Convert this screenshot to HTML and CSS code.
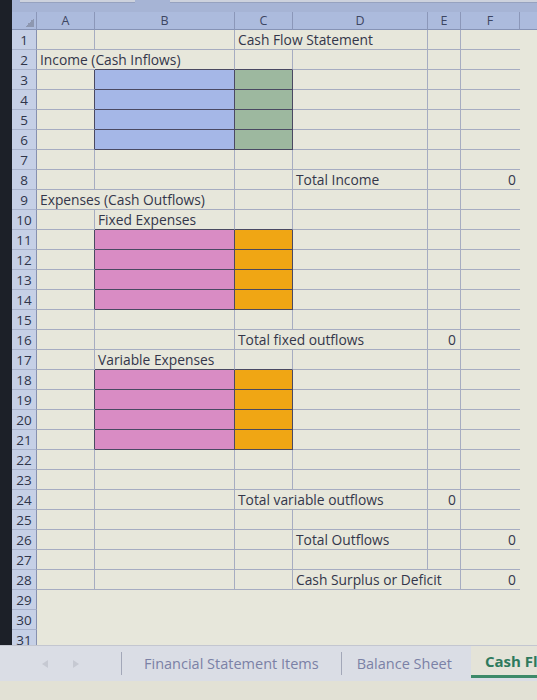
FILE: index.html
```html
<!DOCTYPE html>
<html lang="en">
<head>
    <meta charset="UTF-8">
    <meta name="viewport" content="width=device-width, initial-scale=1.0">
    <title>Cash Flow Statement</title>
    <link rel="stylesheet" href="styles.css">
</head>
<body>
<div class="window">
    <div class="formula-bar">
        <span class="name-box"></span>
        <span class="formula-box"></span>
    </div>

    <div class="sheet">
        <table class="grid">
            <colgroup>
                <col class="c-rn"><col class="c-a"><col class="c-b"><col class="c-c"><col class="c-d"><col class="c-e"><col class="c-f"><col class="c-g">
            </colgroup>
            <thead>
                <tr><th class="corner"></th><th>A</th><th>B</th><th>C</th><th>D</th><th>E</th><th>F</th><th class="rest"></th></tr>
            </thead>
            <tbody>
                <tr><th>1</th><td></td><td></td><td class="spill">Cash Flow Statement</td><td></td><td></td><td></td><td></td></tr>
                <tr><th>2</th><td class="spill">Income (Cash Inflows)</td><td class="db"></td><td class="db"></td><td></td><td></td><td></td><td></td></tr>
                <tr><th>3</th><td class="dr"></td><td class="blue"></td><td class="green"></td><td></td><td></td><td></td><td></td></tr>
                <tr><th>4</th><td class="dr"></td><td class="blue"></td><td class="green"></td><td></td><td></td><td></td><td></td></tr>
                <tr><th>5</th><td class="dr"></td><td class="blue"></td><td class="green"></td><td></td><td></td><td></td><td></td></tr>
                <tr><th>6</th><td class="dr"></td><td class="blue"></td><td class="green"></td><td></td><td></td><td></td><td></td></tr>
                <tr><th>7</th><td></td><td></td><td></td><td></td><td></td><td></td><td></td></tr>
                <tr><th>8</th><td></td><td></td><td></td><td>Total Income</td><td></td><td class="num">0</td><td></td></tr>
                <tr><th>9</th><td class="spill">Expenses (Cash Outflows)</td><td></td><td></td><td></td><td></td><td></td><td></td></tr>
                <tr><th>10</th><td></td><td class="db">Fixed Expenses</td><td class="db"></td><td></td><td></td><td></td><td></td></tr>
                <tr><th>11</th><td class="dr"></td><td class="pink"></td><td class="orange"></td><td></td><td></td><td></td><td></td></tr>
                <tr><th>12</th><td class="dr"></td><td class="pink"></td><td class="orange"></td><td></td><td></td><td></td><td></td></tr>
                <tr><th>13</th><td class="dr"></td><td class="pink"></td><td class="orange"></td><td></td><td></td><td></td><td></td></tr>
                <tr><th>14</th><td class="dr"></td><td class="pink"></td><td class="orange"></td><td></td><td></td><td></td><td></td></tr>
                <tr><th>15</th><td></td><td></td><td></td><td></td><td></td><td></td><td></td></tr>
                <tr><th>16</th><td></td><td></td><td class="spill">Total fixed outflows</td><td></td><td class="num">0</td><td></td><td></td></tr>
                <tr><th>17</th><td></td><td class="db">Variable Expenses</td><td class="db"></td><td></td><td></td><td></td><td></td></tr>
                <tr><th>18</th><td class="dr"></td><td class="pink"></td><td class="orange"></td><td></td><td></td><td></td><td></td></tr>
                <tr><th>19</th><td class="dr"></td><td class="pink"></td><td class="orange"></td><td></td><td></td><td></td><td></td></tr>
                <tr><th>20</th><td class="dr"></td><td class="pink"></td><td class="orange"></td><td></td><td></td><td></td><td></td></tr>
                <tr><th>21</th><td class="dr"></td><td class="pink"></td><td class="orange"></td><td></td><td></td><td></td><td></td></tr>
                <tr><th>22</th><td></td><td></td><td></td><td></td><td></td><td></td><td></td></tr>
                <tr><th>23</th><td></td><td></td><td></td><td></td><td></td><td></td><td></td></tr>
                <tr><th>24</th><td></td><td></td><td class="spill">Total variable outflows</td><td></td><td class="num">0</td><td></td><td></td></tr>
                <tr><th>25</th><td></td><td></td><td></td><td></td><td></td><td></td><td></td></tr>
                <tr><th>26</th><td></td><td></td><td></td><td>Total Outflows</td><td></td><td class="num">0</td><td></td></tr>
                <tr><th>27</th><td></td><td></td><td></td><td></td><td></td><td></td><td></td></tr>
                <tr><th>28</th><td></td><td></td><td></td><td class="spill">Cash Surplus or Deficit</td><td></td><td class="num">0</td><td></td></tr>
                <tr class="blank"><th>29</th><td></td><td></td><td></td><td></td><td></td><td></td><td></td></tr>
                <tr class="blank"><th>30</th><td></td><td></td><td></td><td></td><td></td><td></td><td></td></tr>
                <tr class="blank"><th>31</th><td></td><td></td><td></td><td></td><td></td><td></td><td></td></tr>
            </tbody>
        </table>
    </div>

    <div class="tabs">
        <div class="tab-nav">
            <svg width="6" height="8" viewBox="0 0 6 8"><path d="M6 0 L0 4 L6 8 Z"/></svg>
            <svg width="6" height="8" viewBox="0 0 6 8"><path d="M0 0 L6 4 L0 8 Z"/></svg>
        </div>
        <span class="sep"></span>
        <div class="tab">Financial Statement Items</div>
        <span class="sep"></span>
        <div class="tab tab-short">Balance Sheet</div>
        <div class="tab active">Cash Flow Statement</div>
    </div>
    <div class="status"></div>
</div>
</body>
</html>
```

FILE: styles.css
```css
/* Spreadsheet window */
body {
    margin: 0;
    background-color: #e3e2d6;
    font-family: "Open Sans", "Liberation Sans", sans-serif;
    color: #33364a;
}

.window {
    width: 537px;
    height: 700px;
    overflow: hidden;
    display: flex;
    flex-direction: column;
}

/* Bottom edge of the name box / formula field */
.formula-bar {
    flex: none;
    height: 12px;
    display: flex;
    gap: 35px;
    padding-left: 8px;
    background-color: #a6b4d5;
    border-left: 12px solid #1c2028;
}
.name-box, .formula-box {
    height: 2px;
    background-color: #cdd2dd;
    border-bottom: 1px solid #96a2bf;
}
.name-box { width: 115px; }
.formula-box { flex: 1; }

.sheet {
    flex: none;
    height: 633px;
    overflow: hidden;
    background-color: #e7e7db;
    border-left: 12px solid #1c2028;
}

/* Grid */
.grid {
    width: 525px;
    table-layout: fixed;
    border-collapse: separate;
    border-spacing: 0;
}
.c-rn { width: 25px; }
.c-a { width: 58px; }
.c-b { width: 140px; }
.c-c { width: 58px; }
.c-d { width: 135px; }
.c-e { width: 33px; }
.c-f { width: 59px; }
.c-g { width: 17px; }

.grid thead tr { height: 18px; }
.grid tbody tr { height: 20px; }

.grid thead th {
    padding: 0;
    font-size: 12.5px;
    font-weight: normal;
    line-height: 16px;
    color: #3d4662;
    background-color: #acbbdd;
    border-right: 1px solid #8b97b9;
    border-bottom: 1px solid #8693b5;
}
.grid thead th.rest { border-right: 0; }
.grid thead th.corner {
    background: linear-gradient(to bottom right, transparent 50%, #8d97b0 50%) no-repeat right 2px bottom 2px / 9px 9px, #acbbdd;
}

.grid tbody th {
    padding: 0;
    font-size: 13.5px;
    font-weight: normal;
    line-height: 17px;
    color: #2f3549;
    text-align: center;
    vertical-align: bottom;
    background-color: #c6d0e6;
    border-right: 1px solid #8791b0;
    border-bottom: 1px solid #a9b3cd;
}

.grid td {
    padding: 0 3px;
    font-size: 13.8px;
    line-height: 18px;
    white-space: nowrap;
    vertical-align: bottom;
    border-right: 1px solid #a6acc1;
    border-bottom: 1px solid #a6acc1;
}
/* column F has no right rule, column G is bare sheet */
.grid td:nth-child(7) { border-right: 0; }
.grid td:nth-child(8) { border: 0; }

/* text that runs on into the empty cell beside it */
.grid td.spill { border-right: 0; }
.grid td.num { text-align: right; padding-right: 4px; }

.grid tr.blank td { border: 0; }

/* filled input blocks */
.grid td.db { border-bottom-color: #4a4962; }
.grid td.dr { border-right-color: #4a4962; }
.grid td.blue, .grid td.green, .grid td.pink, .grid td.orange {
    border-right-color: #4a4962;
    border-bottom-color: #4a4962;
}
.grid td.blue { background-color: #a5b7e7; }
.grid td.green { background-color: #9db89f; }
.grid td.pink { background-color: #d98cc4; }
.grid td.orange { background-color: #f0a614; }

/* Sheet tabs */
.tabs {
    flex: none;
    height: 35px;
    display: flex;
    align-items: center;
    background-color: #dadde5;
    border-top: 1px solid #c3c6d0;
    white-space: nowrap;
}
.tab-nav {
    width: 121px;
    display: flex;
    justify-content: center;
    gap: 25px;
    fill: #c6c9d2;
}
.sep {
    width: 1px;
    height: 23px;
    background-color: #a2a7b8;
}
.tab {
    padding: 0 22px;
    font-size: 14.5px;
    color: #7b81a6;
}
.tab-short { padding: 0 15px; }
.tab.active {
    align-self: flex-start;
    height: 29px;
    line-height: 31px;
    margin-left: auto;
    padding: 0 0 0 14px;
    width: 52px;
    overflow: hidden;
    font-size: 15px;
    font-weight: bold;
    color: #2e7a5d;
    background-color: #e4e3d8;
    border-bottom: 3px solid #3d8a69;
    box-sizing: content-box;
}

.status {
    flex: 1;
    background-color: #e2e1d5;
}
```
